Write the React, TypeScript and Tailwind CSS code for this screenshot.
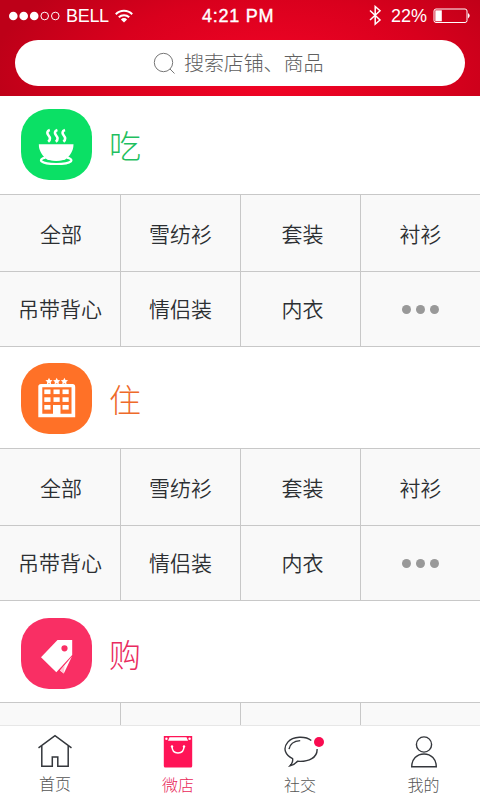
import React from "react";

const labels = ["全部", "雪纺衫", "套装", "衬衫", "吊带背心", "情侣装", "内衣"];

function StatusBar() {
  return (
    <div className="relative flex h-[31px] items-center justify-between pl-[9px] pr-[9px] text-[18px] leading-none text-white">
      <div className="flex items-center">
        <svg width="52" height="12" viewBox="0 0 52 12" fill="#fff">
          <circle cx="4.3" cy="6" r="4.3" />
          <circle cx="14.7" cy="6" r="4.3" />
          <circle cx="25.2" cy="6" r="4.3" />
          <circle cx="35.7" cy="6" r="3.8" fill="none" stroke="#fff" />
          <circle cx="46.3" cy="6" r="3.8" fill="none" stroke="#fff" />
        </svg>
        <span className="ml-[5px] w-[43px] whitespace-nowrap pt-px text-[18px] tracking-[-0.3px]">BELL</span>
        <svg className="ml-[6px]" width="18" height="14" viewBox="0 0 18 14" fill="none" stroke="#fff" strokeWidth="2">
          <path d="M.8 5.2a11.6 11.6 0 0 1 16.4 0" />
          <path d="M3.8 8.3a7.4 7.4 0 0 1 10.4 0" />
          <path d="M9 13.6 5.9 10.4a4.4 4.4 0 0 1 6.2 0z" fill="#fff" stroke="none" />
        </svg>
      </div>
      <span className="absolute left-[202px] top-[7px] whitespace-nowrap text-[18px] tracking-[0.75px] [-webkit-text-stroke:0.4px_white]">4:21 PM</span>
      <div className="flex items-center">
        <svg width="13" height="21" viewBox="0 0 13 21" fill="none" stroke="#fff" strokeWidth="1.5">
          <path d="M1 5.5 11 15l-4.8 4.2V1.5L11 5.7 1 15" />
        </svg>
        <span className="ml-[9px] w-[37px] whitespace-nowrap pt-px text-[18px]">22%</span>
        <svg className="ml-[5px]" width="38" height="16" viewBox="0 0 38 16">
          <rect x="1" y="1" width="33" height="13.5" rx="2" fill="none" stroke="#fff" />
          <rect x="2.3" y="2.3" width="6.5" height="11" fill="#fff" />
          <path d="M35 5q3.4 2.700 0 5.400z" fill="#fff" />
        </svg>
      </div>
    </div>
  );
}

function BowlIcon() {
  return (
    <svg width="71" height="71" viewBox="0 0 71 71" fill="#fff">
      <path d="M17.8 35.2h34.7c0 6.5-3.5 11.8-8.5 15.5q-8.8 2.6-17.7 0c-5-3.7-8.500-9-8.500-15.500z" />
      <path d="M24.500 48.700c-8 1.500-6 6.300 10.800 6.300s18.500-5 10.500-6.300" fill="none" stroke="#fff" strokeWidth="2.200" />
      <path d="M24.500 51q11 3.400 21.500 0" fill="none" stroke="#0be065" strokeWidth="1" />
      <g fill="none" stroke="#fff" strokeWidth="2.600">
        <path d="M28.800 21c-3 1-3 3.200-1.400 5.200s2.600 4.300-.2 6.500" />
        <path d="M36.400 21c-3 1-3 3.200-1.400 5.200s2.600 4.300-.2 6.500" />
        <path d="M44 21c-3 1-3 3.200-1.400 5.200s2.600 4.300-.2 6.500" />
      </g>
    </svg>
  );
}

function HotelIcon() {
  return (
    <svg width="71" height="71" viewBox="0 0 71 71" fill="#fff">
      <path d="M20 21h31.500q2.700 0 2.700 2.700V54.300H17.300V23.700q0-2.700 2.700-2.700z" />
      <path d="M21.300 24.300h29.200V50.800H39.500V42h-7.500v8.800H21.300z" fill="#ff7127" />
      {[26.5, 34.3, 42].map((y) =>
        [23.3, 32.5, 41.5].map((x) => <rect key={`${x}-${y}`} x={x} y={y} width="6.2" height="4.6" />),
      )}
      <path d="M32.500 42h6.200v9.500h-6.200z" />
      {[28, 35.7, 43.4].map((x) => (
        <path key={x} transform={`translate(${x} 18.2)`} d="m0-3.500 1.100 2.200 2.500.3-1.800 1.800.4 2.500L0 2.100l-2.200 1.200.4-2.500L-3.600-1l2.500-.3z" />
      ))}
    </svg>
  );
}

function TagIcon() {
  return (
    <svg width="71" height="71" viewBox="0 0 71 71" fill="#fff">
      <path fillRule="evenodd" d="M36.500 22 51.200 22v15L35.300 54.200 20 39.200zM43.500 27.200a3.100 3.100 0 1 0 0 6.200 3.100 3.100 0 0 0 0-6.200z" />
      <path d="m50.900 38.500-11.900 14 3.800 3z" />
      <path d="m43.600 47.400-4.600 5.100 3.800 3z" fill="#ffc5d2" />
    </svg>
  );
}

function Grid() {
  return (
    <div className="grid h-[153px] shrink-0 grid-cols-[121px_120px_120px_119px] grid-rows-[77px_75px] border-y border-[#c8c8c8] bg-[#f9f9f9] text-[21px] leading-none font-[350] text-[#2c2f32]">
      {labels.map((label, i) => (
        <div
          key={label}
          className={`flex items-center justify-center ${i % 4 !== 3 ? "border-r border-[#c8c8c8]" : ""} ${i < 4 ? "border-b border-b-[#c8c8c8] pt-[2px]" : ""} ${i % 4 === 2 ? "pl-[4px]" : ""} ${i === 0 ? "pl-[2px]" : ""}`}
        >
          {label}
        </div>
      ))}
      <div className="flex items-center justify-center gap-[5px] pr-px">
        <span className="size-[9px] rounded-full bg-[#999]" />
        <span className="size-[9px] rounded-full bg-[#999]" />
        <span className="size-[9px] rounded-full bg-[#999]" />
      </div>
    </div>
  );
}

function GridTop() {
  return (
    <div className="grid h-[23px] grid-cols-[121px_120px_120px_119px] border-t border-[#c8c8c8] bg-[#f9f9f9]">
      <div className="border-r border-[#c8c8c8]" />
      <div className="border-r border-[#c8c8c8]" />
      <div className="border-r border-[#c8c8c8]" />
    </div>
  );
}

function Nav() {
  return (
    <nav className="grid h-[75px] shrink-0 grid-cols-4 border-t border-[#e7e7e7] bg-white text-[16px] leading-none font-light text-[#555]">
      <div className="flex flex-col items-center pr-[10px]">
        <svg className="mt-[8px]" width="36" height="34" viewBox="0 0 36 34" fill="none" stroke="#34373c" strokeWidth="1.5">
          <path d="M1.5 13.8 18 1.7l16.5 12.1M4.8 12v20.200h10.500V23h5.500v9.200h10.400V12" />
        </svg>
        <span className="mt-[9px]">首页</span>
      </div>
      <div className="flex flex-col items-center pr-[4px] text-[#e91e58]">
        <svg className="mt-[9px]" width="30" height="34" viewBox="0 0 30 34">
          <path d="M.8 1h28.400v30q0 1.500-1.500 1.500H2.300Q.8 32.500.8 31z" fill="#ff1457" />
          <path d="M6.500 2.300h17l1.500 3.500h-20z" fill="#fff" />
          <circle cx="3.400" cy="3.700" r="1.200" fill="#fff" />
          <circle cx="26.600" cy="3.700" r="1.200" fill="#fff" />
          <path d="M9 11q0 7 6 7t6-7" fill="none" stroke="#fff" strokeWidth="1.500" />
          <circle cx="9" cy="11.500" r="1.200" fill="#fff" />
          <circle cx="21" cy="11.500" r="1.200" fill="#fff" />
        </svg>
        <span className="mt-[9px]">微店</span>
      </div>
      <div className="flex flex-col items-center">
        <svg className="mt-[9px] ml-[8px]" width="44" height="34" viewBox="0 0 44 34" fill="none" stroke="#34373c" strokeWidth="1.400">
          <path d="M29.300 5.500C23.500.8 11 1 5.800 7.100c-5.500 6.500-2.300 13 4.800 16.600.5 2.800-.8 5.200-2.600 7.100 3.500-.7 5.300-2 7.500-4.500 11.500.8 20-3.700 19.600-12.300" />
          <path d="M7 14.200c.9-5.300 5.300-8.200 11.200-8.600" />
          <circle cx="37" cy="7" r="5" fill="#f90b50" stroke="none" />
        </svg>
        <span className="mt-[9px]">社交</span>
      </div>
      <div className="flex flex-col items-center pl-[7px]">
        <svg className="mt-[9px]" width="28" height="34" viewBox="0 0 28 34" fill="none" stroke="#34373c" strokeWidth="1.400">
          <circle cx="14" cy="9.500" r="7.600" />
          <path d="M1.700 31.800c0-7.500 5-12.800 12.300-12.800s12.300 5.300 12.300 12.800z" />
        </svg>
        <span className="mt-[9px]">我的</span>
      </div>
    </nav>
  );
}

const sections = [
  { name: "吃", icon: <BowlIcon />, head: "h-[98px] pt-[13px]", tile: "bg-[#0be065]", title: "text-[#1fbf60]", grid: <Grid /> },
  { name: "住", icon: <HotelIcon />, head: "h-[101px] pt-[16px]", tile: "bg-[#ff7127]", title: "text-[#ee6a2a]", grid: <Grid /> },
  { name: "购", icon: <TagIcon />, head: "h-[101px] pt-[17px]", tile: "bg-[#f92f64]", title: "text-[#e92b60]", grid: <GridTop /> },
];

export default function App() {
  return (
    <div className="flex h-[800px] w-[480px] flex-col overflow-hidden bg-white font-['Liberation_Sans','Noto_Sans_CJK_SC',sans-serif]">
      <header className="h-[96px] shrink-0 bg-[radial-gradient(ellipse_280px_130px_at_270px_75px,#f40426_0%,#d9001d_60%,#bd0018_100%)]">
        <StatusBar />
        <div className="mx-[15px] mt-[9px] flex h-[46px] items-center rounded-full bg-white pl-[138px] text-[20px] leading-none font-light text-[#606060]">
          <svg width="23" height="23" viewBox="0 0 23 23" fill="none" stroke="#777" strokeWidth="1">
            <circle cx="10.5" cy="10.5" r="9.2" />
            <path d="m17 17 4.5 4.500" />
          </svg>
          <span className="ml-[8px] pt-[2px] tracking-[-0.1px]">搜索店铺、商品</span>
        </div>
      </header>
      <main className="flex min-h-0 flex-1 flex-col overflow-hidden">
        {sections.map((s) => (
          <section key={s.name} className="shrink-0">
            <div className={`flex items-start pl-[21px] ${s.head}`}>
              <div className={`size-[71px] rounded-[28px] ${s.tile}`}>{s.icon}</div>
              <h2 className={`ml-[17px] flex h-[75px] items-center text-[32px] leading-none font-light ${s.title}`}>{s.name}</h2>
            </div>
            {s.grid}
          </section>
        ))}
      </main>
      <Nav />
    </div>
  );
}
